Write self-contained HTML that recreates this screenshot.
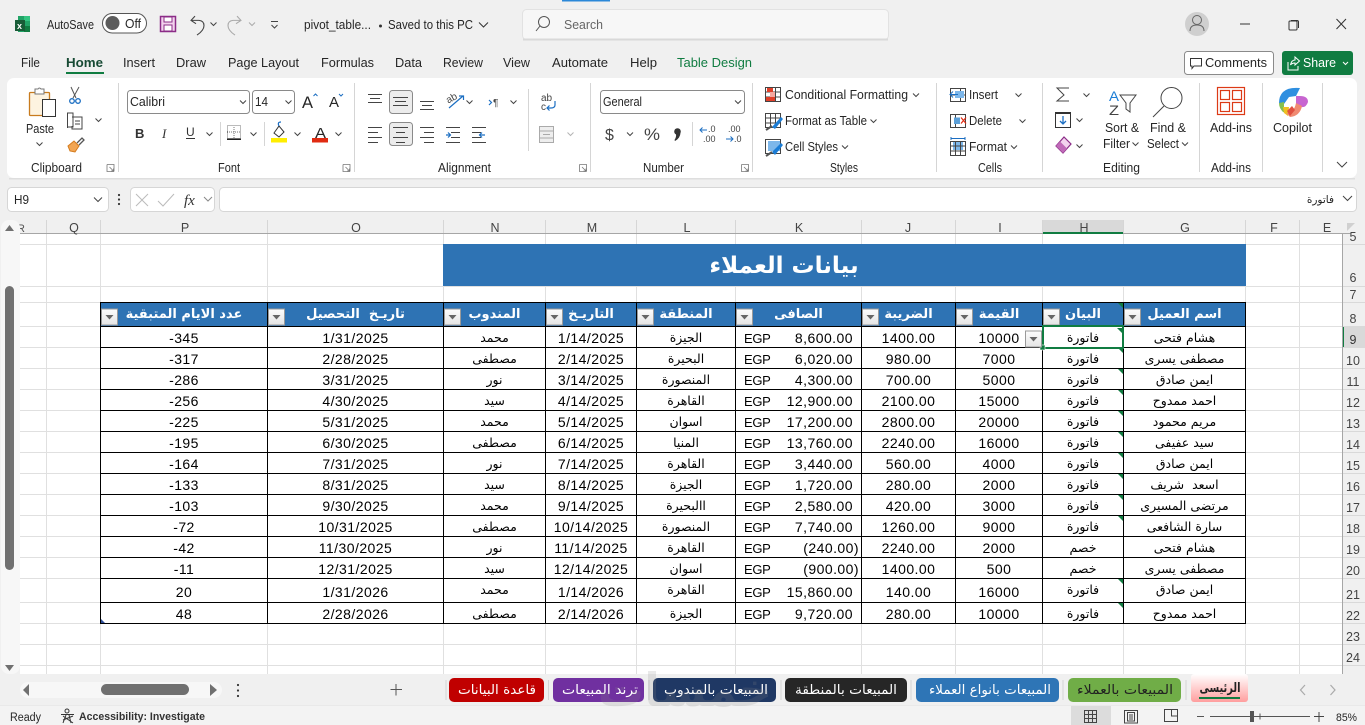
<!DOCTYPE html>
<html lang="en"><head><meta charset="utf-8"><title>pivot_table - Excel</title>
<style>
html,body{margin:0;padding:0;width:1365px;height:725px;overflow:hidden;background:#f0f0f0}
svg{position:absolute;left:0;top:0;display:block}
svg text{font-family:"Liberation Sans","DejaVu Sans",sans-serif;font-size:12.5px;fill:#262626}
#s1{z-index:1}#s2{z-index:3}
#d{position:absolute;z-index:2;left:100px;top:302px;width:1146px;border-collapse:collapse;table-layout:fixed;font-family:"Liberation Sans","DejaVu Sans",sans-serif;font-size:14px;letter-spacing:.45px;color:#000;background:#fff}
#d td,#d th{border:1px solid #000;padding:2px 0 0;height:18px;line-height:18px;text-align:center;vertical-align:bottom;white-space:nowrap;overflow:hidden}
#d th{padding:0;background:#2e73b4;color:#fff;font:bold 13px "DejaVu Sans",sans-serif;height:23px;line-height:23px;vertical-align:middle;letter-spacing:0}
#d td.a{font:12.5px "DejaVu Sans",sans-serif;line-height:15px;letter-spacing:-.2px;padding:0 0 2px;height:18px}
#d td.k{text-align:right;padding-right:8px;position:relative}
#d .k span{position:absolute;left:8px;margin-top:1px;font-size:13px;letter-spacing:-.3px}
#d tr.h21 td{height:21px;vertical-align:middle}
</style></head><body>
<svg id="s1" width="1365" height="725" viewBox="0 0 1365 725" xmlns="http://www.w3.org/2000/svg">
<defs>
<path id="c" d="M-3-1.5L0 1.5L3-1.5" fill="none" stroke="#444" stroke-width="1"/>
<g id="la" fill="none" stroke="#777" stroke-width=".8"><path d="M-3.5-3.5H3.5V3.5M-3.5-3.5V3.5H3.5M-1-1L3 3M3 .5V3H.5"/></g>
</defs>
<rect width="1365" height="725" fill="#f0f0f0"/>
<rect x="562" y="0" width="48" height="1.5" fill="#2b88d8"/>
<!-- title bar -->
<rect x="18" y="16" width="12" height="16" fill="#21a366"/><rect x="24" y="16" width="6" height="5" fill="#33c481"/><rect x="24" y="26" width="6" height="6" fill="#107c41"/>
<rect x="15" y="20" width="10" height="11" fill="#185c37"/><text x="17" y="29" style="font-size:9px;font-weight:bold;fill:#fff">x</text>
<text x="47" y="29" textLength="47" lengthAdjust="spacingAndGlyphs">AutoSave</text>
<rect x="102.500" y="13.500" width="44" height="19.500" rx="9.700" fill="#fff" stroke="#555"/><circle cx="112.500" cy="23" r="7" fill="#5c5c5c"/><text x="125" y="28" textLength="16" lengthAdjust="spacingAndGlyphs">Off</text>
<rect x="160.500" y="16.500" width="15" height="15" fill="#f3d3ee" stroke="#8b2c87" stroke-width="1.500"/><rect x="164" y="17" width="8" height="5" fill="#fff" stroke="#8b2c87"/><rect x="164" y="25" width="8" height="6" fill="#fff" stroke="#8b2c87"/>
<path d="M195 18L191 22.500L196 26M191.500 22.500H199Q204 23 204 28Q204 33 197 38" transform="translate(0,-1) scale(1,.95)" fill="none" stroke="#444" stroke-width="1.100"/><use href="#c" x="213.500" y="24"/>
<path d="M237 18L241 22.500L236 26M240.500 22.500H233Q228 23 228 28Q228 33 235 38" transform="translate(0,-1) scale(1,.95)" fill="none" stroke="#aaa" stroke-width="1.100"/><use href="#c" x="252" y="24" opacity=".4"/>
<path d="M271 21.500H278M271.500 25L274.500 28L277.500 25" fill="none" stroke="#444"/>
<text x="304" y="29" textLength="67" lengthAdjust="spacingAndGlyphs">pivot_table...</text><circle cx="380.500" cy="26" r="1.500" fill="#333"/><text x="388" y="29" textLength="85" lengthAdjust="spacingAndGlyphs">Saved to this PC</text><path d="M479 22.500L483.500 27L488 22.500" fill="none" stroke="#333"/>
<rect x="522.500" y="9.500" width="366" height="30" rx="4" fill="#f7f7f7" stroke="#e2e2e2"/><rect x="523" y="38.500" width="365" height="2" fill="#d9d9d9"/>
<circle cx="544" cy="22" r="5.500" fill="none" stroke="#555"/><path d="M540 26L536 31" stroke="#555"/><text x="564" y="29" textLength="39" lengthAdjust="spacingAndGlyphs" style="fill:#666">Search</text>
<circle cx="1197" cy="24" r="12" fill="#cfcfcf"/><circle cx="1197" cy="20" r="4.500" fill="none" stroke="#666"/><path d="M1190 31Q1190 25 1197 25Q1204 25 1204 31" fill="none" stroke="#666"/>
<path d="M1240 24H1250" stroke="#333"/><rect x="1289" y="21" width="8" height="9" rx="1" fill="none" stroke="#333"/><path d="M1291 20.500H1297Q1298.500 20.500 1298.500 22V28" fill="none" stroke="#333"/><path d="M1336.500 19L1346 29M1346 19L1336.500 29" stroke="#333"/>
<!-- ribbon tabs -->
<g>
<text x="21" y="67" textLength="19" lengthAdjust="spacingAndGlyphs">File</text>
<text x="66" y="67" textLength="37" lengthAdjust="spacingAndGlyphs" style="font-weight:bold;fill:#174a34">Home</text><rect x="66" y="72" width="38" height="2" fill="#107c41"/>
<text x="123" y="67" textLength="32" lengthAdjust="spacingAndGlyphs">Insert</text>
<text x="176" y="67" textLength="30" lengthAdjust="spacingAndGlyphs">Draw</text>
<text x="228" y="67" textLength="71" lengthAdjust="spacingAndGlyphs">Page Layout</text>
<text x="321" y="67" textLength="53" lengthAdjust="spacingAndGlyphs">Formulas</text>
<text x="395" y="67" textLength="27" lengthAdjust="spacingAndGlyphs">Data</text>
<text x="443" y="67" textLength="40" lengthAdjust="spacingAndGlyphs">Review</text>
<text x="503" y="67" textLength="27" lengthAdjust="spacingAndGlyphs">View</text>
<text x="552" y="67" textLength="56" lengthAdjust="spacingAndGlyphs">Automate</text>
<text x="630" y="67" textLength="27" lengthAdjust="spacingAndGlyphs">Help</text>
<text x="677" y="67" textLength="75" lengthAdjust="spacingAndGlyphs" style="fill:#107c41">Table Design</text>
</g>
<rect x="1184.500" y="51.500" width="89" height="23" rx="3" fill="#fff" stroke="#8a8a8a"/>
<path d="M1190.500 58.500H1201.500V66H1194L1192 68.500V66H1190.500Z" fill="none" stroke="#333"/><text x="1205" y="67" textLength="62" lengthAdjust="spacingAndGlyphs">Comments</text>
<rect x="1282" y="51" width="71" height="24" rx="3" fill="#107c41"/><path d="M1288 62V70H1298V66M1290.500 65Q1291.500 60 1295 60V57L1299.500 61L1295 65V63Q1292 63 1290.500 65Z" fill="none" stroke="#fff"/><text x="1303" y="67" textLength="33" lengthAdjust="spacingAndGlyphs" style="fill:#fff">Share</text><path d="M1343 62L1345.500 64.500L1348 62" fill="none" stroke="#fff"/>
<!-- ribbon panel -->
<rect x="7" y="78" width="1350" height="100" rx="7" fill="#fff"/><rect x="9" y="178" width="1346" height="1.500" fill="#dedede"/>
<g stroke="#d5d5d5"><path d="M118.500 83V172M354.500 83V172M590.500 83V172M752.500 83V172M936.500 83V172M1042.500 83V172M1199.500 83V172M1262.500 83V172M1322.500 83V172"/><path d="M528.500 89V151M220.500 122V146M264.500 122V146M692.500 122V146"/></g>
<!-- clipboard -->
<rect x="29.500" y="92.500" width="20" height="23" rx="1" fill="#fdf3e0" stroke="#c87b1e" stroke-width="1.300"/><path d="M35 92V89H38Q39 87 41 89H44V94H35Z" fill="#fff" stroke="#777"/><rect x="42.500" y="99.500" width="13" height="17" fill="#fff" stroke="#333"/>
<text x="26" y="133" textLength="28" lengthAdjust="spacingAndGlyphs">Paste</text><use href="#c" x="39.500" y="144"/>
<path d="M71 87L76 98M79 87L73 98" stroke="#555" fill="none"/><circle cx="72" cy="101" r="2.300" fill="none" stroke="#1b6ec2" stroke-width="1.300"/><circle cx="78" cy="101" r="2.300" fill="none" stroke="#1b6ec2" stroke-width="1.300"/>
<path d="M67.500 128V113H73V127H67.500M72 117H82V129H72V126" fill="#fff" stroke="#444"/><path d="M75 121H80M75 124H80" stroke="#444"/><use href="#c" x="98.500" y="120"/>
<path d="M68 146L74 141L79 146L75 152L70 151Z" fill="#f2a552" stroke="#d47b1d"/><path d="M77 143L82 138L84 140L79 145" fill="none" stroke="#555" stroke-width="1.300"/>
<text x="31" y="172" textLength="51" lengthAdjust="spacingAndGlyphs">Clipboard</text><use href="#la" x="110.500" y="168"/>
<!-- font -->
<rect x="127.500" y="90.500" width="122" height="23" rx="3" fill="#fff" stroke="#8a8a8a"/><text x="130" y="106" textLength="35" lengthAdjust="spacingAndGlyphs">Calibri</text><use href="#c" x="243" y="102"/>
<rect x="252.500" y="90.500" width="42" height="23" rx="3" fill="#fff" stroke="#8a8a8a"/><text x="255" y="106" textLength="13" lengthAdjust="spacingAndGlyphs">14</text><use href="#c" x="288.500" y="102"/>
<text x="302" y="108" style="font-size:17px" textLength="11" lengthAdjust="spacingAndGlyphs">A</text><path d="M313.500 96L315.500 94L317.500 96" fill="none" stroke="#1b6ec2"/>
<text x="329" y="107" style="font-size:15px" textLength="10" lengthAdjust="spacingAndGlyphs">A</text><path d="M339 94L341 96L343 94" fill="none" stroke="#1b6ec2"/>
<text x="135" y="138" style="font-size:13px;font-weight:bold;fill:#333">B</text><text x="162" y="138" style="font-size:13px;font-style:italic;font-family:'Liberation Serif',serif;fill:#333">I</text><text x="186" y="136" style="font-size:12px;fill:#333">U</text><rect x="186" y="138" width="9" height="1" fill="#333"/><use href="#c" x="209.500" y="134"/>
<rect x="227.500" y="125.500" width="13" height="13" fill="none" stroke="#777" stroke-dasharray="1 1"/><path d="M234 125V139M227 132H241" stroke="#777" stroke-dasharray="1 1"/><rect x="227" y="138.500" width="14" height="1.500" fill="#222"/><use href="#c" x="253.500" y="134"/>
<path d="M274 133L279 126L284 132L279 137Z" fill="#fff" stroke="#333"/><path d="M279 126Q277 122 281 122" fill="none" stroke="#1b6ec2" stroke-width="1.200"/><rect x="271" y="138" width="16" height="4.500" fill="#ffee00"/><use href="#c" x="297.500" y="134"/>
<text x="315" y="138" style="font-size:15px" textLength="11" lengthAdjust="spacingAndGlyphs">A</text><rect x="312" y="138" width="16" height="4.500" fill="#e02b12"/><use href="#c" x="338.500" y="134"/>
<text x="218" y="172" textLength="22" lengthAdjust="spacingAndGlyphs">Font</text><use href="#la" x="346.500" y="168"/>
<!-- alignment -->
<rect x="389.500" y="90.500" width="23" height="23" rx="3" fill="#ececec" stroke="#8a8a8a"/><rect x="389.500" y="122.500" width="23" height="23" rx="3" fill="#ececec" stroke="#8a8a8a"/>
<g stroke="#444" fill="none">
<path d="M368 94.500H382M370 98.500H380M368 102.500H382"/><path d="M393 97.500H408M395 101.500H406M393 105.500H408"/><path d="M420 101.500H434M422 105.500H432M420 109.500H434"/>
<path d="M368 127.500H382M368 132.500H378M368 137.500H382M368 142.500H378"/><path d="M393 127.500H408M396 132.500H405M393 137.500H408M396 142.500H405"/><path d="M420 127.500H434M424 132.500H434M420 137.500H434M424 142.500H434"/>
<path d="M446 127.500H460M451 132.500H460M451 137.500H460M446 142.500H460"/><path d="M472 127.500H486M472 132.500H481M472 137.500H481M472 142.500H486"/>
</g>
<path d="M446 135H450M448 132.500L450.500 135L448 137.500M485 135H480M482 132.500L479.500 135L482 137.500" fill="none" stroke="#1b6ec2" stroke-width="1.200"/>
<path d="M449 108L463 96M459 96H463.500V100" fill="none" stroke="#1b6ec2" stroke-width="1.200"/><text x="446" y="101" style="font-size:10px;fill:#444" transform="rotate(-30 452 98)">ab</text><use href="#c" x="469.500" y="102"/>
<path d="M489 100L491.500 102.500L489 105" fill="none" stroke="#1b6ec2" stroke-width="1.200"/><text x="493" y="106" style="font-size:10px;fill:#444">¶</text><use href="#c" x="513.500" y="102"/>
<text x="541" y="101" style="font-size:10px;fill:#444">ab</text><text x="541" y="110" style="font-size:10px;fill:#444">c</text><path d="M555 101V105Q555 108 551 108H547M549.500 105.500L547 108L549.500 110.500" fill="none" stroke="#1b6ec2" stroke-width="1.200"/>
<rect x="539.500" y="126.500" width="14" height="16" fill="#eee" stroke="#aaa"/><path d="M540 131H553M540 138H553M543 134.500H550" stroke="#aaa"/><use href="#c" x="570.500" y="134" opacity=".4"/>
<text x="438" y="172" textLength="53" lengthAdjust="spacingAndGlyphs">Alignment</text><use href="#la" x="583" y="168"/>
<!-- number -->
<rect x="600.500" y="90.500" width="144" height="23" rx="3" fill="#fff" stroke="#8a8a8a"/><text x="603" y="106" textLength="39" lengthAdjust="spacingAndGlyphs">General</text><use href="#c" x="738" y="102"/>
<text x="605" y="140" style="font-size:16px;fill:#444">$</text><use href="#c" x="630" y="134"/><text x="644" y="140" style="font-size:17px;fill:#444" textLength="16" lengthAdjust="spacingAndGlyphs">%</text><circle cx="677.500" cy="131.500" r="3.300" fill="#333"/><path d="M680.500 132Q680.500 138 675 141L674.500 140Q676.500 137 676 134Z" fill="#333"/>
<text x="708" y="132" style="font-size:9px;fill:#444">.0</text><text x="703" y="142" style="font-size:9px;fill:#444">.00</text><path d="M700 130H707M702.500 127.500L700 130L702.500 132.500" fill="none" stroke="#1b6ec2"/>
<text x="728" y="132" style="font-size:9px;fill:#444">.00</text><text x="734" y="142" style="font-size:9px;fill:#444">.0</text><path d="M726 139H733M730.500 136.500L733 139L730.500 141.500" fill="none" stroke="#1b6ec2"/>
<text x="643" y="172" textLength="41" lengthAdjust="spacingAndGlyphs">Number</text><use href="#la" x="745" y="168"/>
<!-- styles -->
<g fill="none" stroke="#444"><rect x="765.500" y="87.500" width="15" height="14"/><path d="M770.500 87V102M775.500 87V102M765 92H781M765 97H781"/></g><rect x="767" y="88" width="6" height="4" fill="#e0402a"/><rect x="766" y="97" width="9" height="4" fill="#e0402a"/><rect x="770" y="92" width="5" height="5" fill="#f7a8a0"/>
<text x="785" y="99" textLength="123" lengthAdjust="spacingAndGlyphs">Conditional Formatting</text><use href="#c" x="916" y="95"/>
<g fill="none" stroke="#444"><rect x="765.500" y="113.500" width="15" height="14"/><path d="M770.500 113V128M775.500 113V128M765 118H781M765 123H781"/></g><path d="M772 127L781 117L783 119L775 129Z" fill="#1b7dd6"/><path d="M766 130L772 126" stroke="#555" stroke-width="2"/>
<text x="785" y="125" textLength="82" lengthAdjust="spacingAndGlyphs">Format as Table</text><use href="#c" x="873.500" y="121"/>
<g fill="none" stroke="#444"><rect x="765.500" y="139.500" width="15" height="14"/></g><rect x="768" y="141" width="12" height="10" fill="#7db7ea"/><path d="M772 152L781 143L783 145L775 155Z" fill="#1b7dd6"/><path d="M766 156L772 152" stroke="#555" stroke-width="2"/>
<text x="785" y="151" textLength="53" lengthAdjust="spacingAndGlyphs">Cell Styles</text><use href="#c" x="845" y="147"/>
<text x="830" y="172" textLength="28" lengthAdjust="spacingAndGlyphs">Styles</text>
<!-- cells -->
<g fill="none" stroke="#444"><path d="M950.500 88.500H965.500V101.500H950.500ZM960.500 88V102M950 95H966"/></g><rect x="955" y="91" width="9" height="7" fill="#7db7ea"/><path d="M950 94.500H958M953 91.500L950 94.500L953 97.500" fill="none" stroke="#1b6ec2"/>
<text x="969" y="99" textLength="29" lengthAdjust="spacingAndGlyphs">Insert</text><use href="#c" x="1018.500" y="95"/>
<g fill="none" stroke="#444"><path d="M950.500 114.500H965.500V127.500H950.500ZM955.500 114V128"/></g><rect x="954" y="117.500" width="6" height="6.500" fill="#5b9fd8"/><path d="M961 117.500L966 123.500M966 117.500L961 123.500" stroke="#e02b12" stroke-width="1.200"/>
<text x="969" y="125" textLength="33" lengthAdjust="spacingAndGlyphs">Delete</text><use href="#c" x="1022.500" y="121"/>
<rect x="953" y="142" width="10" height="8" fill="#7db7ea"/><g fill="none" stroke="#444"><path d="M950.500 141.500H965.500V155.500H950.500ZM955.500 141V156M960.500 141V156M950 146H966M950 151H966"/></g><path d="M951 138.500H965M951 137V140M965 137V140" fill="none" stroke="#1b6ec2"/>
<text x="969" y="151" textLength="38" lengthAdjust="spacingAndGlyphs">Format</text><use href="#c" x="1014" y="147"/>
<text x="978" y="172" textLength="24" lengthAdjust="spacingAndGlyphs">Cells</text>
<!-- editing -->
<path d="M1069 88H1057L1064 95L1057 101H1069" fill="none" stroke="#444"/><use href="#c" x="1086.500" y="95"/>
<rect x="1055.500" y="112.500" width="15" height="15" fill="#fff" stroke="#333"/><rect x="1055" y="112" width="16" height="2" fill="#333"/><path d="M1063 116V124M1060 121L1063 124L1066 121" fill="none" stroke="#1b6ec2" stroke-width="1.300"/><use href="#c" x="1079.500" y="120"/>
<path d="M1056 146L1064 137L1071 144L1063 153Z" fill="#f3d3ee" stroke="#8b2c87" stroke-width="1.200"/><path d="M1056 146L1060 141.500L1067 148.500L1063 153Z" fill="#c06ab8"/><use href="#c" x="1079.500" y="146"/>
<text x="1109" y="101" style="font-size:14px;fill:#1b7dd6" textLength="10" lengthAdjust="spacingAndGlyphs">A</text><text x="1109" y="115" style="font-size:14px;fill:#444" textLength="10" lengthAdjust="spacingAndGlyphs">Z</text><path d="M1120 95H1136L1130 103V112L1126 109V103Z" fill="none" stroke="#444"/>
<text x="1105" y="132" textLength="34" lengthAdjust="spacingAndGlyphs">Sort &amp;</text><text x="1103" y="148" textLength="27" lengthAdjust="spacingAndGlyphs">Filter</text><use href="#c" x="1135.500" y="144"/>
<circle cx="1171.500" cy="98" r="10.500" fill="#fff" stroke="#444"/><path d="M1164 106L1153 117" stroke="#444"/>
<text x="1150" y="132" textLength="36" lengthAdjust="spacingAndGlyphs">Find &amp;</text><text x="1147" y="148" textLength="32" lengthAdjust="spacingAndGlyphs">Select</text><use href="#c" x="1185" y="144"/>
<text x="1103" y="172" textLength="37" lengthAdjust="spacingAndGlyphs">Editing</text>
<!-- add-ins -->
<g fill="none" stroke="#dc3a16" stroke-width="1.200"><rect x="1217.500" y="87.500" width="27" height="27"/><rect x="1220.500" y="90.500" width="9" height="9"/><rect x="1232.500" y="90.500" width="9" height="9"/><rect x="1220.500" y="102.500" width="9" height="9"/><rect x="1232.500" y="102.500" width="9" height="9"/></g>
<text x="1210" y="132" textLength="42" lengthAdjust="spacingAndGlyphs">Add-ins</text><text x="1211" y="172" textLength="40" lengthAdjust="spacingAndGlyphs">Add-ins</text>
<!-- copilot -->
<path d="M1283 92Q1288 87 1300 88L1296 96L1289 97L1284 104L1279 103Q1279 96 1283 92Z" fill="#2f8fe0"/><path d="M1279 103L1284 102L1284 110L1286 113L1283 112Q1279 108 1279 103Z" fill="#86c04e"/><path d="M1283 107H1289L1288 116L1284 113Z" fill="#f0c020"/><path d="M1296 96H1300Q1308 96 1308 102Q1306 108 1301 107L1296 104Z" fill="#c765d0"/><path d="M1296 103L1302 106Q1300 116 1290 117L1286 113Q1294 113 1296 103Z" fill="#f08a72"/><path d="M1287 111L1292 106L1295 110L1290 116Z" fill="#e05040"/>
<text x="1273" y="132" textLength="39" lengthAdjust="spacingAndGlyphs">Copilot</text>
<path d="M1337 162L1342 167L1347 162" fill="none" stroke="#444"/>
<!-- formula bar -->
<rect x="7.500" y="187.500" width="101" height="24" rx="4" fill="#fff" stroke="#d6d6d6"/><text x="14" y="204" textLength="15" lengthAdjust="spacingAndGlyphs">H9</text><path d="M94 197.500L98 201.500L102 197.500" fill="none" stroke="#444"/>
<circle cx="119" cy="195" r="1.100" fill="#333"/><circle cx="119" cy="199.500" r="1.100" fill="#333"/><circle cx="119" cy="204" r="1.100" fill="#333"/>
<rect x="130.500" y="187.500" width="84" height="24" rx="4" fill="#fff" stroke="#d6d6d6"/><path d="M136 194L148 206M148 194L136 206" stroke="#bbb"/><path d="M158 201L163 206L174 194" fill="none" stroke="#bbb"/><text x="184" y="205" style="font-size:15px;font-style:italic;font-family:'Liberation Serif',serif;fill:#333">fx</text><path d="M204 197L208 201L212 197" fill="none" stroke="#888"/>
<rect x="219.500" y="187.500" width="1137" height="24" rx="4" fill="#fff" stroke="#d6d6d6"/><text x="1334" y="203" text-anchor="start" direction="rtl" style="font:10.500px 'DejaVu Sans',sans-serif">فاتورة</text><path d="M1343 196L1347.500 200.500L1352 196" fill="none" stroke="#444"/>
<!-- column header -->
<rect x="20" y="234" width="1322" height="440" fill="#fff"/>
<rect x="1342" y="234" width="23" height="440" fill="#f0f0f0"/>
<rect x="1043" y="220" width="80" height="14" fill="#d9d9d9"/><rect x="1043" y="232" width="80" height="2" fill="#107c41"/>
<rect x="20" y="233" width="1023" height="1" fill="#a6a6a6"/><rect x="1123" y="233" width="228" height="1" fill="#a6a6a6"/>
<g stroke="#d6d6d6"><path d="M46.500 220V233M100.500 220V233M267.500 220V233M443.500 220V233M545.500 220V233M636.500 220V233M735.500 220V233M861.500 220V233M955.500 220V233M1042.500 220V233M1123.500 220V233M1245.500 220V233M1299.500 220V233"/></g>
<g>
<text x="21" y="232" text-anchor="middle" style="font-size:11px;fill:#555">R</text><text x="74" y="232" text-anchor="middle" style="fill:#444">Q</text><text x="185" y="232" text-anchor="middle" style="fill:#444">P</text><text x="356" y="232" text-anchor="middle" style="fill:#444">O</text><text x="495" y="232" text-anchor="middle" style="fill:#444">N</text><text x="592" y="232" text-anchor="middle" style="fill:#444">M</text><text x="687" y="232" text-anchor="middle" style="fill:#444">L</text><text x="799" y="232" text-anchor="middle" style="fill:#444">K</text><text x="908" y="232" text-anchor="middle" style="fill:#444">J</text><text x="1000" y="232" text-anchor="middle" style="fill:#444">I</text><text x="1084" y="232" text-anchor="middle" style="fill:#444">H</text><text x="1185" y="232" text-anchor="middle" style="fill:#444">G</text><text x="1274" y="232" text-anchor="middle" style="fill:#444">F</text><text x="1327" y="232" text-anchor="middle" style="fill:#444">E</text>
</g>
<path d="M1347 231L1355 231L1355 223Z" transform="rotate(180 1351 227)" fill="#d0d0d0"/>
<!-- gridlines -->
<g stroke="#e0e0e0"><path d="M46.500 234V674M100.500 234V674M267.500 234V674M443.500 234V674M545.500 234V674M636.500 234V674M735.500 234V674M861.500 234V674M955.500 234V674M1042.500 234V674M1123.500 234V674M1245.500 234V674M1299.500 234V674"/>
<path d="M20 244.500H1342M20 286.500H1342M20 302.500H1342M20 326.500H1342M20 347.500H1342M20 368.500H1342M20 389.500H1342M20 410.500H1342M20 431.500H1342M20 452.500H1342M20 473.500H1342M20 494.500H1342M20 515.500H1342M20 536.500H1342M20 557.500H1342M20 578.500H1342M20 602.500H1342M20 623.500H1342M20 644.500H1342M20 665.500H1342"/>
<path d="M1342 244.500H1365M1342 286.500H1365M1342 302.500H1365M1342 326.500H1365M1342 347.500H1365M1342 368.500H1365M1342 389.500H1365M1342 410.500H1365M1342 431.500H1365M1342 452.500H1365M1342 473.500H1365M1342 494.500H1365M1342 515.500H1365M1342 536.500H1365M1342 557.500H1365M1342 578.500H1365M1342 602.500H1365M1342 623.500H1365M1342 644.500H1365M1342 665.500H1365" stroke="#d9d9d9"/></g>
<rect x="1342" y="327" width="23" height="20" fill="#d9d9d9"/><rect x="1342" y="327" width="2" height="20" fill="#107c41"/>
<rect x="1342" y="234" width="1" height="440" fill="#a6a6a6"/>
<rect x="443" y="244" width="803" height="42" fill="#2e73b4"/>
<text x="784" y="273" text-anchor="middle" direction="rtl" style="font:bold 23px 'DejaVu Sans',sans-serif;fill:#fff">بيانات العملاء</text>
<g>
<text x="1353" y="241" text-anchor="middle" style="fill:#444">5</text><text x="1353" y="282" text-anchor="middle" style="fill:#444">6</text><text x="1353" y="299" text-anchor="middle" style="fill:#444">7</text><text x="1353" y="323" text-anchor="middle" style="fill:#444">8</text><text x="1353" y="344" text-anchor="middle" style="fill:#333">9</text><text x="1353" y="365" text-anchor="middle" style="fill:#444">10</text><text x="1353" y="386" text-anchor="middle" style="fill:#444">11</text><text x="1353" y="407" text-anchor="middle" style="fill:#444">12</text><text x="1353" y="428" text-anchor="middle" style="fill:#444">13</text><text x="1353" y="449" text-anchor="middle" style="fill:#444">14</text><text x="1353" y="470" text-anchor="middle" style="fill:#444">15</text><text x="1353" y="491" text-anchor="middle" style="fill:#444">16</text><text x="1353" y="512" text-anchor="middle" style="fill:#444">17</text><text x="1353" y="533" text-anchor="middle" style="fill:#444">18</text><text x="1353" y="554" text-anchor="middle" style="fill:#444">19</text><text x="1353" y="575" text-anchor="middle" style="fill:#444">20</text><text x="1353" y="599" text-anchor="middle" style="fill:#444">21</text><text x="1353" y="620" text-anchor="middle" style="fill:#444">22</text><text x="1353" y="641" text-anchor="middle" style="fill:#444">23</text><text x="1353" y="662" text-anchor="middle" style="fill:#444">24</text>
</g>
<!-- left scrollbar -->
<rect x="1" y="220" width="19" height="454" rx="8" fill="#f7f7f7"/><rect x="5" y="286" width="9" height="284" rx="4.500" fill="#707070"/>
<path d="M5 231L9.500 225L14 231Z" fill="#707070"/><path d="M5 665L9.500 671L14 665Z" fill="#707070"/>
<!-- bottom -->
<rect x="20" y="682" width="202" height="16" rx="8" fill="#f7f7f7"/><path d="M29 684V696L23 690Z" fill="#707070"/><rect x="101" y="684" width="88" height="11" rx="5.500" fill="#707070"/><path d="M210 684V696L217 690Z" fill="#707070"/>
<circle cx="238" cy="685" r="1.100" fill="#333"/><circle cx="238" cy="690.500" r="1.100" fill="#333"/><circle cx="238" cy="696" r="1.100" fill="#333"/>
<path d="M396 684V695.500M390.500 689.500H402" stroke="#555"/>
<path d="M1305 690L1300.500 695L1305 700M1330.500 690L1335 695L1330.500 700" transform="translate(0,-5)" fill="none" stroke="#aaa" stroke-width="1.200"/>
<g stroke="#d5d5d5"><path d="M446 680V700M548.500 680V700M649 680V700M781 680V700M911 680V700M1063 680V700M1186 680V700"/></g>
<rect x="0" y="705" width="1365" height="20" fill="#f3f3f3"/><rect x="0" y="705" width="1365" height="1" fill="#e9e9e9"/>
<text x="10" y="721" textLength="31" lengthAdjust="spacingAndGlyphs" style="font-size:11.500px">Ready</text>
<circle cx="67" cy="711" r="2" fill="none" stroke="#333"/><path d="M61 714.500H74M66 715L63 723M69 715L71 723M63 720L73 716M63 716L73 723" fill="none" stroke="#333"/>
<text x="79" y="720" textLength="126" lengthAdjust="spacingAndGlyphs" style="font-size:11px;font-weight:bold;fill:#333">Accessibility: Investigate</text>
<rect x="1071" y="706" width="40" height="19" fill="#dcdcdc"/>
<g fill="none" stroke="#444"><path d="M1084.500 710.500H1096.500V722.500H1084.500ZM1088.500 710V723M1092.500 710V723M1084 714.500H1097M1084 718.500H1097"/>
<rect x="1124.500" y="710.500" width="13" height="12.500"/><rect x="1127.500" y="712.500" width="7" height="8.500"/><path d="M1129 715H1133M1129 717H1133M1129 719H1133"/>
<path d="M1164.500 709.500H1177.500V721.500H1164.500ZM1171.500 709.500V716H1177"/></g>
<path d="M1197 716.500H1204M1210 716.500H1310" stroke="#555"/><rect x="1250" y="711" width="4" height="11" fill="#555"/><rect x="1259.500" y="713.500" width="1" height="6" fill="#555"/><path d="M1319 712V722M1314 716.500H1324" stroke="#444"/>
<text x="1336" y="721" textLength="21" lengthAdjust="spacingAndGlyphs" style="font-size:11px">85%</text>
</svg>

<table id="d">
<colgroup><col style="width:167px"><col style="width:176px"><col style="width:102px"><col style="width:91px"><col style="width:99px"><col style="width:126px"><col style="width:94px"><col style="width:87px"><col style="width:81px"><col style="width:122px"></colgroup>
<tr><th>عدد الايام المتبقية</th><th>تاريـخ&nbsp;&nbsp;التحصيل</th><th>المندوب</th><th>التاريـخ</th><th>المنطقة</th><th>الصافى</th><th>الضريبة</th><th>القيمة</th><th>البيان</th><th>اسم العميل</th></tr>
<tr><td>-345</td><td>1/31/2025</td><td class="a">محمد</td><td>1/14/2025</td><td class="a">الجيزة</td><td class="k"><span>EGP</span>8,600.00</td><td>1400.00</td><td>10000</td><td class="a">فاتورة</td><td class="a">هشام فتحى</td></tr>
<tr><td>-317</td><td>2/28/2025</td><td class="a">مصطفى</td><td>2/14/2025</td><td class="a">البحيرة</td><td class="k"><span>EGP</span>6,020.00</td><td>980.00</td><td>7000</td><td class="a">فاتورة</td><td class="a">مصطفى يسرى</td></tr>
<tr><td>-286</td><td>3/31/2025</td><td class="a">نور</td><td>3/14/2025</td><td class="a">المنصورة</td><td class="k"><span>EGP</span>4,300.00</td><td>700.00</td><td>5000</td><td class="a">فاتورة</td><td class="a">ايمن صادق</td></tr>
<tr><td>-256</td><td>4/30/2025</td><td class="a">سيد</td><td>4/14/2025</td><td class="a">القاهرة</td><td class="k"><span>EGP</span>12,900.00</td><td>2100.00</td><td>15000</td><td class="a">فاتورة</td><td class="a">احمد ممدوح</td></tr>
<tr><td>-225</td><td>5/31/2025</td><td class="a">محمد</td><td>5/14/2025</td><td class="a">اسوان</td><td class="k"><span>EGP</span>17,200.00</td><td>2800.00</td><td>20000</td><td class="a">فاتورة</td><td class="a">مريم محمود</td></tr>
<tr><td>-195</td><td>6/30/2025</td><td class="a">مصطفى</td><td>6/14/2025</td><td class="a">المنيا</td><td class="k"><span>EGP</span>13,760.00</td><td>2240.00</td><td>16000</td><td class="a">فاتورة</td><td class="a">سيد عفيفى</td></tr>
<tr><td>-164</td><td>7/31/2025</td><td class="a">نور</td><td>7/14/2025</td><td class="a">القاهرة</td><td class="k"><span>EGP</span>3,440.00</td><td>560.00</td><td>4000</td><td class="a">فاتورة</td><td class="a">ايمن صادق</td></tr>
<tr><td>-133</td><td>8/31/2025</td><td class="a">سيد</td><td>8/14/2025</td><td class="a">الجيزة</td><td class="k"><span>EGP</span>1,720.00</td><td>280.00</td><td>2000</td><td class="a">فاتورة</td><td class="a">اسعد&nbsp;&nbsp;شريف</td></tr>
<tr><td>-103</td><td>9/30/2025</td><td class="a">محمد</td><td>9/14/2025</td><td class="a">االبحيرة</td><td class="k"><span>EGP</span>2,580.00</td><td>420.00</td><td>3000</td><td class="a">فاتورة</td><td class="a">مرتضى المسيرى</td></tr>
<tr><td>-72</td><td>10/31/2025</td><td class="a">مصطفى</td><td>10/14/2025</td><td class="a">المنصورة</td><td class="k"><span>EGP</span>7,740.00</td><td>1260.00</td><td>9000</td><td class="a">فاتورة</td><td class="a">سارة الشافعى</td></tr>
<tr><td>-42</td><td>11/30/2025</td><td class="a">نور</td><td>11/14/2025</td><td class="a">القاهرة</td><td class="k" style="padding-right:2px"><span>EGP</span>(240.00)</td><td>2240.00</td><td>2000</td><td class="a">خصم</td><td class="a">هشام فتحى</td></tr>
<tr><td>-11</td><td>12/31/2025</td><td class="a">سيد</td><td>12/14/2025</td><td class="a">اسوان</td><td class="k" style="padding-right:2px"><span>EGP</span>(900.00)</td><td>1400.00</td><td>500</td><td class="a">خصم</td><td class="a">مصطفى يسرى</td></tr>
<tr class="h21"><td>20</td><td>1/31/2026</td><td class="a">محمد</td><td>1/14/2026</td><td class="a">القاهرة</td><td class="k"><span>EGP</span>15,860.00</td><td>140.00</td><td>16000</td><td class="a">فاتورة</td><td class="a">ايمن صادق</td></tr>
<tr><td>48</td><td>2/28/2026</td><td class="a">مصطفى</td><td>2/14/2026</td><td class="a">الجيزة</td><td class="k"><span>EGP</span>9,720.00</td><td>280.00</td><td>10000</td><td class="a">فاتورة</td><td class="a">احمد ممدوح</td></tr>
</table>

<svg id="s2" width="1365" height="725" viewBox="0 0 1365 725" xmlns="http://www.w3.org/2000/svg">
<defs>
<linearGradient id="fb" x1="0" y1="0" x2="0" y2="1"><stop offset="0" stop-color="#fdfdfd"/><stop offset="1" stop-color="#e4e4e4"/></linearGradient>
<linearGradient id="pk" x1="0" y1="0" x2="0" y2="1"><stop offset="0" stop-color="#fff"/><stop offset="1" stop-color="#ff9e9e"/></linearGradient>
<g id="f"><rect x=".5" y=".5" width="16" height="16" fill="url(#fb)" stroke="#9a9a9a"/><path d="M4.500 6.500H12.500L8.500 11Z" fill="#666"/></g>
<path id="tr" d="M-5 1H0V6Z" fill="#107c41"/>
</defs>
<use href="#f" x="101" y="308.500"/><use href="#f" x="268" y="308.500"/><use href="#f" x="444" y="308.500"/><use href="#f" x="546" y="308.500"/><use href="#f" x="637" y="308.500"/><use href="#f" x="736" y="308.500"/><use href="#f" x="862" y="308.500"/><use href="#f" x="956" y="308.500"/><use href="#f" x="1043" y="308.500"/><use href="#f" x="1124" y="308.500"/>
<use href="#tr" x="1123" y="302"/><use href="#tr" x="1123" y="347"/><use href="#tr" x="1123" y="368"/><use href="#tr" x="1123" y="389"/><use href="#tr" x="1123" y="410"/><use href="#tr" x="1123" y="431"/><use href="#tr" x="1123" y="452"/><use href="#tr" x="1123" y="473"/><use href="#tr" x="1123" y="494"/><use href="#tr" x="1123" y="515"/><use href="#tr" x="1123" y="578"/><use href="#tr" x="1123" y="602"/>
<rect x="1043" y="326" width="80" height="22" fill="none" stroke="#107c41" stroke-width="2"/><rect x="1040" y="345" width="5" height="5" fill="#107c41" stroke="#fff" stroke-width=".6"/><use href="#tr" x="1122" y="327"/>
<use href="#f" x="1025" y="330.500"/>
<path d="M101 619V623H105Z" fill="#2e4f9a"/>
<!-- tabs -->
<g>
<rect x="449" y="678" width="95" height="24" rx="5" fill="#c00000"/><text x="497" y="694" text-anchor="middle" direction="rtl" textLength="78" lengthAdjust="spacingAndGlyphs" style="font:13px 'DejaVu Sans',sans-serif;fill:#fff">قاعدة البيانات</text>
<rect x="553" y="678" width="91" height="24" rx="5" fill="#7030a0"/><text x="600" y="694" text-anchor="middle" direction="rtl" textLength="76" lengthAdjust="spacingAndGlyphs" style="font:13px 'DejaVu Sans',sans-serif;fill:#fff">ترند المبيعات</text>
<rect x="653" y="678" width="123" height="24" rx="5" fill="#1f3864"/><text x="716" y="694" text-anchor="middle" direction="rtl" textLength="104" lengthAdjust="spacingAndGlyphs" style="font:13px 'DejaVu Sans',sans-serif;fill:#fff">المبيعات بالمندوب</text>
<rect x="785" y="678" width="122" height="24" rx="5" fill="#262626"/><text x="846" y="694" text-anchor="middle" direction="rtl" textLength="102" lengthAdjust="spacingAndGlyphs" style="font:13px 'DejaVu Sans',sans-serif;fill:#fff">المبيعات بالمنطقة</text>
<rect x="916" y="678" width="143" height="24" rx="5" fill="#2e75b6"/><text x="990" y="694" text-anchor="middle" direction="rtl" textLength="122" lengthAdjust="spacingAndGlyphs" style="font:13px 'DejaVu Sans',sans-serif;fill:#fff">المبيعات بانواع العملاء</text>
<rect x="1068" y="678" width="113" height="24" rx="5" fill="#70ad47"/><text x="1125" y="694" text-anchor="middle" direction="rtl" textLength="96" lengthAdjust="spacingAndGlyphs" style="font:13px 'DejaVu Sans',sans-serif;fill:#222">المبيعات بالعملاء</text>
<rect x="1191" y="674" width="57" height="28" rx="3" fill="url(#pk)"/><text x="1220" y="692" text-anchor="middle" direction="rtl" textLength="41" lengthAdjust="spacingAndGlyphs" style="font:bold 13px 'DejaVu Sans',sans-serif;fill:#222">الرئيسى</text><rect x="1199" y="697" width="41" height="2" fill="#107c41"/>
</g>
<text x="685" y="706" text-anchor="middle" direction="rtl" style="font:bold 46px 'DejaVu Sans',sans-serif;fill:#888;opacity:.18">خمسات</text>
</svg>
</body></html>
